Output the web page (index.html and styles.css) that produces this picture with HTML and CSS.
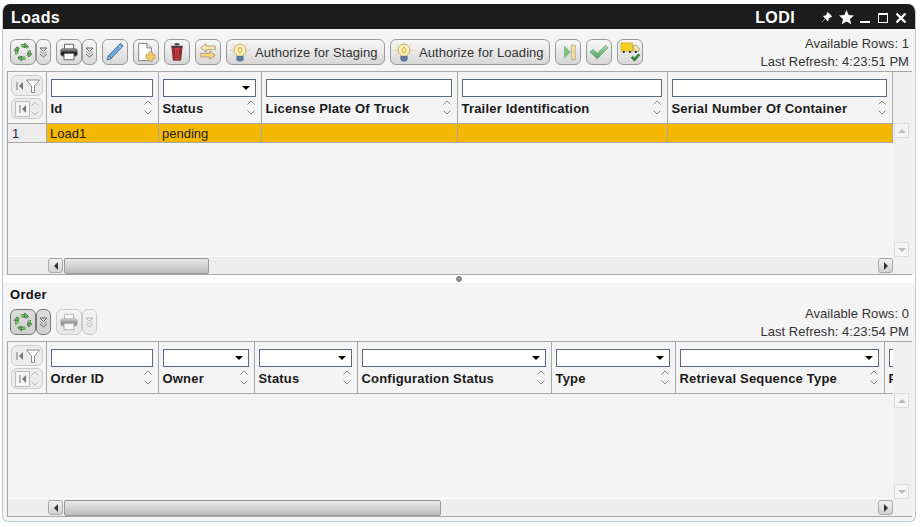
FILE: index.html
```html
<!DOCTYPE html>
<html lang="en">
<head>
    <meta charset="UTF-8">
    <title>Loads</title>
    <link rel="stylesheet" href="styles.css">
</head>
<body>
    <svg class="sprite" aria-hidden="true">
        <defs>
            <linearGradient id="g-print" x1="0" y1="0" x2="0" y2="1">
                <stop offset="0" stop-color="#aaa"/>
                <stop offset="0.6" stop-color="#111"/>
                <stop offset="1" stop-color="#333"/>
            </linearGradient>
            <linearGradient id="g-check" x1="0" y1="0" x2="0" y2="1">
                <stop offset="0" stop-color="#a9dcae"/>
                <stop offset="1" stop-color="#4fa35a"/>
            </linearGradient>
            <linearGradient id="g-trash" x1="0" y1="0" x2="1" y2="0">
                <stop offset="0" stop-color="#8c2a2d"/>
                <stop offset="0.5" stop-color="#e0484c"/>
                <stop offset="1" stop-color="#8c2a2d"/>
            </linearGradient>
        </defs>
        <symbol id="i-refresh" viewBox="0 0 22 22">
            <circle cx="11" cy="11" r="7" fill="none" stroke="#555" stroke-width="3.400" stroke-dasharray="8 3" stroke-dashoffset="3"/>
            <circle cx="11" cy="11" r="7" fill="none" stroke="#6fd25c" stroke-width="2.400" stroke-dasharray="8 3" stroke-dashoffset="3"/>
            <path d="M13 1l3.500 3.500L12 6zM21 13l-3.500 3.500L16 12zM9 21l-3.500-3.500L10 16zM1 9l3.500-3.500L6 10z" fill="#5cc653" stroke="#444" stroke-width=".6"/>
        </symbol>
        <symbol id="i-print" viewBox="0 0 22 22">
            <path d="M6 2.500h10v6H6z" fill="#fff" stroke="#555"/>
            <rect x="2" y="7.500" width="18" height="8" rx="2" fill="url(#g-print)" stroke="#666"/>
            <path d="M5.500 12.500h11v7H5.500z" fill="#fff" stroke="#555"/>
        </symbol>
        <symbol id="i-drop" viewBox="0 0 9 11">
            <path d="M1 1h7L4.500 4.500zM1 7l3.500 3L8 7" fill="none" stroke="#666"/>
            <path d="M1 4.500l3.500 2.500L8 4.500" fill="none" stroke="#999"/>
        </symbol>
        <symbol id="i-pencil" viewBox="0 0 22 22">
            <path d="M17 1.500l3 3L7 18l-4.500 1.500L4 15z" fill="#6ea8d8" stroke="#3d6a94"/>
            <path d="M15.500 4.500l2 2" stroke="#dcebf7" fill="none"/>
            <path d="M4 15l3 3-4.500 1.500z" fill="#cfd8df" stroke="#3d6a94"/>
        </symbol>
        <symbol id="i-new" viewBox="0 0 22 22">
            <path d="M3 1.500h9l5 5v14H3z" fill="#fff" stroke="#777"/>
            <path d="M12 1.500v5h5" fill="#e6e6e6" stroke="#777"/>
            <path d="M14 11h4v3h3v4h-3v3h-4v-3h-3v-4h3z" fill="#f7cf6a" stroke="#b08a2e" stroke-width=".7"/>
        </symbol>
        <symbol id="i-trash" viewBox="0 0 22 22">
            <path d="M8.500 2.500h5M4.500 5h13" stroke="#444" stroke-width="2" fill="none"/>
            <path d="M5.500 6h11l-1.500 14H7z" fill="url(#g-trash)" stroke="#5a2a2a"/>
            <path d="M8 8l.8 10M11 8v10M14 8l-.8 10" stroke="#7a2224" fill="none"/>
        </symbol>
        <symbol id="i-swap" viewBox="0 0 22 22">
            <path d="M9 2L3 6.500 9 11V8.500h10v-4H9z" fill="#fbe6ad" stroke="#8f8a70" stroke-width=".8"/>
            <path d="M13 10l6 4.500-6 4.500v-2.500H3v-4h10z" fill="#f8d679" stroke="#8f8a70" stroke-width=".8"/>
        </symbol>
        <symbol id="i-bulb" viewBox="0 0 22 22">
            <path d="M11 0v2M3 2l2 2M19 2l-2 2M0 9h3M19 9h3M2 15l2-1.500M20 15l-2-1.500" stroke="#d9c98c" fill="none"/>
            <path d="M11 2.500a6.500 6.500 0 0 1 3.500 12v1H7.500v-1a6.500 6.500 0 0 1 3.500-12z" fill="#fbeeb0" stroke="#b5a874"/>
            <path d="M11 5.500l2.500 3.500-2.500 3.500L8.500 9z" fill="none" stroke="#c9a23a"/>
            <path d="M7.500 16h7v3L13 21H9l-1.500-2z" fill="#5c7fa8" stroke="#3b506b" stroke-width=".7"/>
        </symbol>
        <symbol id="i-step" viewBox="0 0 22 22">
            <path d="M6.500 3.500l7.500 7.500-7.500 8z" fill="#7fc08a"/>
            <path d="M14.500 3.500H19v16h-4.500z" fill="#f4dc9a" stroke="#a8a088" stroke-width=".8"/>
        </symbol>
        <symbol id="i-check" viewBox="0 0 24 22">
            <path d="M1 11l4-3 5 4.500L20 3l3 3-13 13z" fill="url(#g-check)" stroke="#5f9f67" stroke-width=".8"/>
        </symbol>
        <symbol id="i-truck" viewBox="0 0 24 24">
            <path d="M1 1h14v10H1z" fill="#f9cf1e" stroke="#8a7a30" stroke-width=".6" stroke-dasharray="2 1"/>
            <path d="M16 4h4l3 3.500V11h-7z" fill="#f5e3a0" stroke="#777" stroke-width=".6"/>
            <circle cx="4.500" cy="12" r="1.300" fill="#111"/>
            <circle cx="12" cy="12" r="1.300" fill="#111"/>
            <circle cx="19" cy="12" r="1.300" fill="#111"/>
            <path d="M13 19l2.200-2 2.300 2 4.500-5 2 1.800-6.500 7.200z" fill="#2f8a3a" stroke="#1d5a26" stroke-width=".5"/>
        </symbol>
        <symbol id="i-sort" viewBox="0 0 10 16">
            <path d="M1.500 4.500L5 1l3.500 3.500M1.500 10.500L5 14l3.500-3.500" fill="none" stroke="#8a8a8a"/>
        </symbol>
        <symbol id="i-filter" viewBox="0 0 14 14">
            <path d="M.5 1h13L8.500 7v6.500h-3V7z" fill="#fff" stroke="#8a8a8a"/>
        </symbol>
        <symbol id="i-first" viewBox="0 0 8 10">
            <path d="M1 1v8" stroke="#777" fill="none"/>
            <path d="M7 1v8L3 5z" fill="#777"/>
        </symbol>
        <symbol id="i-pin" viewBox="0 0 12 12">
            <path d="M7 0l5 5-1.500.5-2.500 2-.5 2.500L2.500 4.500l2.500-.5 2-2.500zM4.500 7.500L1 11" fill="#fff" stroke="#fff" stroke-width=".6"/>
        </symbol>
        <symbol id="i-star" viewBox="0 0 16 16">
            <path d="M8 0l2.300 5.300 5.700.5-4.300 3.800 1.300 5.600L8 12.300l-5 2.900 1.300-5.600L0 5.800l5.700-.5z" fill="#fff"/>
        </symbol>
        <symbol id="i-close" viewBox="0 0 12 12">
            <path d="M1.500 1.500l9 9M10.500 1.500l-9 9" stroke="#fff" stroke-width="2.400" fill="none"/>
        </symbol>
    </svg>

    <div class="window">
        <div class="titlebar">
            <span class="title">Loads</span>
            <span class="title-user">LODI</span>
            <svg class="win-pin"><use href="#i-pin"/></svg>
            <svg class="win-star"><use href="#i-star"/></svg>
            <span class="win-min"></span>
            <span class="win-max"></span>
            <svg class="win-close"><use href="#i-close"/></svg>
        </div>

        <div class="toolbar">
            <div class="tools">
                <div class="tool-group">
                    <button class="tool"><svg class="icon"><use href="#i-refresh"/></svg></button>
                    <button class="tool tool-drop"><svg class="icon-drop"><use href="#i-drop"/></svg></button>
                </div>
                <div class="tool-group">
                    <button class="tool"><svg class="icon"><use href="#i-print"/></svg></button>
                    <button class="tool tool-drop"><svg class="icon-drop"><use href="#i-drop"/></svg></button>
                </div>
                <button class="tool"><svg class="icon"><use href="#i-pencil"/></svg></button>
                <button class="tool"><svg class="icon"><use href="#i-new"/></svg></button>
                <button class="tool"><svg class="icon"><use href="#i-trash"/></svg></button>
                <button class="tool"><svg class="icon"><use href="#i-swap"/></svg></button>
                <button class="tool tool-text tool-staging"><svg class="icon"><use href="#i-bulb"/></svg><span>Authorize for Staging</span></button>
                <button class="tool tool-text tool-loading"><svg class="icon"><use href="#i-bulb"/></svg><span>Authorize for Loading</span></button>
                <button class="tool"><svg class="icon"><use href="#i-step"/></svg></button>
                <button class="tool"><svg class="icon"><use href="#i-check"/></svg></button>
                <button class="tool"><svg class="icon"><use href="#i-truck"/></svg></button>
            </div>
            <div class="status">
                <div>Available Rows: 1</div>
                <div>Last Refresh: 4:23:51 PM</div>
            </div>
        </div>

        <div class="grid grid-loads">
            <div class="grid-main">
                <div class="grid-head">
                    <div class="corner">
                        <div class="corner-btn"><svg class="icon-first"><use href="#i-first"/></svg><svg class="icon-filter"><use href="#i-filter"/></svg></div>
                        <div class="corner-btn"><span class="corner-box"><svg class="icon-first"><use href="#i-first"/></svg></span><svg class="icon-sort"><use href="#i-sort"/></svg></div>
                    </div>
                    <div class="col w-112">
                        <input class="filter" type="text">
                        <div class="col-label"><span>Id</span><svg class="icon-sort"><use href="#i-sort"/></svg></div>
                    </div>
                    <div class="col w-103">
                        <div class="filter filter-select"></div>
                        <div class="col-label"><span>Status</span><svg class="icon-sort"><use href="#i-sort"/></svg></div>
                    </div>
                    <div class="col w-196">
                        <input class="filter" type="text">
                        <div class="col-label"><span>License Plate Of Truck</span><svg class="icon-sort"><use href="#i-sort"/></svg></div>
                    </div>
                    <div class="col w-210">
                        <input class="filter" type="text">
                        <div class="col-label"><span>Trailer Identification</span><svg class="icon-sort"><use href="#i-sort"/></svg></div>
                    </div>
                    <div class="col w-225">
                        <input class="filter" type="text">
                        <div class="col-label"><span>Serial Number Of Container</span><svg class="icon-sort"><use href="#i-sort"/></svg></div>
                    </div>
                </div>
                <div class="grid-row">
                    <div class="row-num">1</div>
                    <div class="cell w-112">Load1</div>
                    <div class="cell w-103">pending</div>
                    <div class="cell w-196"></div>
                    <div class="cell w-210"></div>
                    <div class="cell w-225"></div>
                </div>
                <div class="grid-body"></div>
                <div class="hscroll">
                    <span class="sb-btn"><i class="arrow-left"></i></span>
                    <span class="sb-thumb thumb-loads"></span>
                    <span class="sb-fill"></span>
                    <span class="sb-btn"><i class="arrow-right"></i></span>
                </div>
            </div>
            <div class="vscroll">
                <span class="vs-btn"><i class="arrow-up"></i></span>
                <span class="vs-btn"><i class="arrow-down"></i></span>
            </div>
        </div>

        <div class="splitter"><span class="split-dot"></span></div>

        <div class="section-title">Order</div>

        <div class="toolbar">
            <div class="tools">
                <div class="tool-group">
                    <button class="tool tool-active"><svg class="icon"><use href="#i-refresh"/></svg></button>
                    <button class="tool tool-drop tool-active"><svg class="icon-drop"><use href="#i-drop"/></svg></button>
                </div>
                <div class="tool-group tool-disabled">
                    <button class="tool"><svg class="icon"><use href="#i-print"/></svg></button>
                    <button class="tool tool-drop"><svg class="icon-drop"><use href="#i-drop"/></svg></button>
                </div>
            </div>
            <div class="status">
                <div>Available Rows: 0</div>
                <div>Last Refresh: 4:23:54 PM</div>
            </div>
        </div>

        <div class="grid grid-orders">
            <div class="grid-main">
                <div class="grid-head">
                    <div class="corner">
                        <div class="corner-btn"><svg class="icon-first"><use href="#i-first"/></svg><svg class="icon-filter"><use href="#i-filter"/></svg></div>
                        <div class="corner-btn"><span class="corner-box"><svg class="icon-first"><use href="#i-first"/></svg></span><svg class="icon-sort"><use href="#i-sort"/></svg></div>
                    </div>
                    <div class="col w-112">
                        <input class="filter" type="text">
                        <div class="col-label"><span>Order ID</span><svg class="icon-sort"><use href="#i-sort"/></svg></div>
                    </div>
                    <div class="col w-96">
                        <div class="filter filter-select"></div>
                        <div class="col-label"><span>Owner</span><svg class="icon-sort"><use href="#i-sort"/></svg></div>
                    </div>
                    <div class="col w-103">
                        <div class="filter filter-select"></div>
                        <div class="col-label"><span>Status</span><svg class="icon-sort"><use href="#i-sort"/></svg></div>
                    </div>
                    <div class="col w-194">
                        <div class="filter filter-select"></div>
                        <div class="col-label"><span>Configuration Status</span><svg class="icon-sort"><use href="#i-sort"/></svg></div>
                    </div>
                    <div class="col w-124">
                        <div class="filter filter-select"></div>
                        <div class="col-label"><span>Type</span><svg class="icon-sort"><use href="#i-sort"/></svg></div>
                    </div>
                    <div class="col w-209">
                        <div class="filter filter-select"></div>
                        <div class="col-label"><span>Retrieval Sequence Type</span><svg class="icon-sort"><use href="#i-sort"/></svg></div>
                    </div>
                    <div class="col col-clip">
                        <input class="filter filter-clip" type="text">
                        <div class="col-label"><span>Priority</span></div>
                    </div>
                </div>
                <div class="grid-body"></div>
                <div class="hscroll">
                    <span class="sb-btn"><i class="arrow-left"></i></span>
                    <span class="sb-thumb thumb-orders"></span>
                    <span class="sb-fill"></span>
                    <span class="sb-btn"><i class="arrow-right"></i></span>
                </div>
            </div>
            <div class="vscroll">
                <span class="vs-btn"><i class="arrow-up"></i></span>
                <span class="vs-btn"><i class="arrow-down"></i></span>
            </div>
        </div>
    </div>
</body>
</html>
```

FILE: styles.css
```css
body {
    margin: 0;
    background: #fff;
    font-family: "Liberation Sans", Arial, sans-serif;
    font-size: 13px;
    color: #222;
}

.sprite {
    width: 0;
    height: 0;
    display: block;
}

.window {
    box-sizing: border-box;
    width: 914px;
    height: 518px;
    margin: 4px 0 0 2px;
    background: #f4f4f4;
    border: 1px solid #b9cbd3;
    border-top: 0;
    border-radius: 8px 8px 6px 6px;
    overflow: hidden;
    display: flex;
    flex-direction: column;
}

/* title bar */
.titlebar {
    box-sizing: border-box;
    height: 25px;
    flex: none;
    margin: 0 -1px;
    background: #1c1c1c;
    color: #fff;
    display: flex;
    align-items: center;
    padding: 2px 9px 0 9px;
}

.title {
    font-size: 16px;
    font-weight: bold;
    letter-spacing: 0.4px;
    flex: 1;
}

.title-user {
    font-size: 16px;
    font-weight: bold;
    letter-spacing: 0.4px;
    margin-right: 26px;
}

.win-pin {
    width: 11px;
    height: 11px;
    margin-right: 7px;
}

.win-star {
    width: 15px;
    height: 15px;
    margin-right: 6px;
}

.win-min {
    width: 10px;
    height: 2px;
    background: #fff;
    margin: 9px 8px 0 0;
}

.win-max {
    box-sizing: border-box;
    width: 10px;
    height: 10px;
    border: 1px solid #fff;
    border-top-width: 2px;
    margin-right: 7px;
}

.win-close {
    width: 12px;
    height: 12px;
}

/* toolbars */
.toolbar {
    height: 26px;
    flex: none;
    display: flex;
    justify-content: space-between;
    align-items: center;
    padding: 10px 6px 6px 7px;
}

.section-title + .toolbar {
    padding-top: 0;
}

.tools {
    display: flex;
    gap: 5px;
}

.tool-group {
    display: flex;
}

.tool {
    box-sizing: border-box;
    width: 26px;
    height: 26px;
    padding: 0;
    border: 1px solid #9a9a9a;
    border-radius: 6px;
    background: linear-gradient(#f6f6f6, #e8e8e8 50%, #d6d6d6);
    display: flex;
    align-items: center;
    justify-content: center;
    font: inherit;
    color: #333;
}

.tool-drop {
    width: 15px;
}

.tool-active {
    border-color: #777;
    background: linear-gradient(#dcdcdc, #cfcfcf);
}

.tool-disabled {
    opacity: 0.45;
}

.tool-text {
    justify-content: flex-start;
    gap: 5px;
    padding-left: 3px;
    letter-spacing: 0.05px;
}

.tool-staging {
    width: 159px;
}

.tool-loading {
    width: 160px;
}

.icon {
    width: 20px;
    height: 20px;
    flex: none;
}

.icon-drop {
    width: 9px;
    height: 11px;
}

.status {
    text-align: right;
    line-height: 18px;
    padding-top: 2px;
    letter-spacing: 0.05px;
    color: #333;
}

/* grids */
.grid {
    flex: none;
    display: flex;
    margin: 0 3px 0 4px;
    border: solid #a8a8a8;
    border-width: 1px 0 1px 1px;
    box-sizing: border-box;
}

.grid-loads {
    height: 204px;
}

.grid-orders {
    height: 176px;
}

.grid-main {
    width: 885px;
    flex: none;
    display: flex;
    flex-direction: column;
    overflow: hidden;
}

.grid-head {
    box-sizing: border-box;
    height: 52px;
    flex: none;
    display: flex;
    border-bottom: 1px solid #a8a8a8;
}

.corner {
    box-sizing: border-box;
    width: 39px;
    flex: none;
    border-right: 1px solid #a8a8a8;
    padding: 3px 0 0 3px;
    display: flex;
    flex-direction: column;
    gap: 2px;
}

.corner-btn {
    box-sizing: border-box;
    width: 32px;
    height: 21px;
    border: 1px solid #cdcdcd;
    border-radius: 6px;
    background: #ececec;
    display: flex;
    align-items: center;
    justify-content: space-between;
    padding: 0 2px 0 4px;
}

.corner-box {
    box-sizing: border-box;
    width: 16px;
    height: 16px;
    margin-left: -1px;
    border: 1px solid #bbb;
    background: #f4f4f4;
    display: flex;
    align-items: center;
    justify-content: center;
}

.corner .icon-sort {
    opacity: 0.55;
}

.icon-first {
    width: 8px;
    height: 10px;
}

.icon-filter {
    width: 14px;
    height: 14px;
}

.icon-sort {
    width: 10px;
    height: 16px;
    flex: none;
}

.col {
    box-sizing: border-box;
    flex: none;
    padding: 7px 5px 0 4px;
    border-right: 1px solid #a8a8a8;
    overflow: hidden;
}

.w-96 { width: 96px; }
.w-103 { width: 103px; }
.w-112 { width: 112px; }
.w-124 { width: 124px; }
.w-194 { width: 194px; }
.w-196 { width: 196px; }
.w-209 { width: 209px; }
.w-210 { width: 210px; }
.w-225 { width: 225px; }

.col-clip {
    width: 8px;
    padding-right: 0;
    border-right: 0;
}

.filter {
    box-sizing: border-box;
    display: flex;
    align-items: center;
    justify-content: flex-end;
    width: 100%;
    height: 18px;
    margin: 0;
    padding: 0 4px;
    border: 1px solid #5c6880;
    background: #fff;
}

.filter-clip {
    width: 30px;
}

.filter-select::after {
    content: "";
    border: solid transparent;
    border-width: 4px 4px 0;
    border-top-color: #000;
    margin-right: 1px;
}

.col-label {
    display: flex;
    justify-content: space-between;
    align-items: center;
    height: 22px;
    margin-left: -0.5px;
    font-weight: bold;
    letter-spacing: 0.2px;
    white-space: nowrap;
    color: #1a1a1a;
}

.grid-row {
    box-sizing: border-box;
    height: 19px;
    flex: none;
    display: flex;
    border-bottom: 1px solid #a8a8a8;
    line-height: 19px;
}

.row-num {
    box-sizing: border-box;
    width: 39px;
    flex: none;
    padding-left: 4px;
    background: #ececec;
    border-right: 1px solid #a8a8a8;
    color: #1a2a4a;
}

.cell {
    box-sizing: border-box;
    flex: none;
    padding-left: 3px;
    background: #f5b800;
    border-right: 1px solid #a8a8a8;
    color: #222;
}

.grid-body {
    flex: 1;
}

/* scrollbars */
.hscroll {
    box-sizing: border-box;
    height: 18px;
    flex: none;
    display: flex;
    align-items: center;
    gap: 1px;
    padding: 0 0 0 40px;
    background: #eee;
    border-top: 1px solid #fff;
}

.sb-btn {
    box-sizing: border-box;
    width: 15px;
    height: 15px;
    flex: none;
    border: 1px solid #aaa;
    border-radius: 3px;
    background: linear-gradient(#f2f2f2, #d2d2d2);
    display: flex;
    align-items: center;
    justify-content: center;
}

.sb-thumb {
    box-sizing: border-box;
    height: 16px;
    flex: none;
    border: 1px solid #999;
    border-radius: 2px;
    background: linear-gradient(#e8e8e8, #bcbcbc);
}

.thumb-loads {
    width: 145px;
}

.thumb-orders {
    width: 377px;
}

.sb-fill {
    flex: 1;
}

.arrow-left {
    border: solid transparent;
    border-width: 4px 4px 4px 0;
    border-right-color: #333;
}

.arrow-right {
    border: solid transparent;
    border-width: 4px 0 4px 4px;
    border-left-color: #333;
}

.vscroll {
    flex: 1;
    box-sizing: border-box;
    display: flex;
    flex-direction: column;
    justify-content: space-between;
    padding: 51px 4px 17px 1px;
    background: #f0f0f0;
}

.vs-btn {
    box-sizing: border-box;
    width: 15px;
    height: 15px;
    border: 1px solid #ddd;
    background: #f4f4f4;
    display: flex;
    align-items: center;
    justify-content: center;
}

.arrow-up {
    border: solid transparent;
    border-width: 0 4px 4px;
    border-bottom-color: #bbb;
}

.arrow-down {
    border: solid transparent;
    border-width: 4px 4px 0;
    border-top-color: #bbb;
}

/* splitter between the two grids */
.splitter {
    height: 8px;
    flex: none;
    background: #fff;
    display: flex;
    justify-content: center;
    align-items: center;
}

.split-dot {
    box-sizing: border-box;
    width: 6px;
    height: 6px;
    border-radius: 50%;
    background: #999;
    border: 1px solid #777;
}

.section-title {
    height: 26px;
    flex: none;
    box-sizing: border-box;
    padding: 4px 0 0 7px;
    font-weight: bold;
    letter-spacing: 0.3px;
    line-height: 15px;
    color: #111;
}
```
